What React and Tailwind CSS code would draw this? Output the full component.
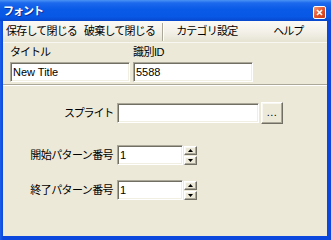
import React from 'react';

const font = { fontFamily: '"Liberation Sans", "Noto Sans CJK JP", sans-serif' };

const sunken =
  'bg-white border border-t-[#aca899] border-l-[#aca899] border-b-white border-r-white shadow-[inset_1px_1px_0_#716f64,inset_-1px_-1px_0_#f1efe2]';

const raised =
  'bg-[#ece9d8] border border-t-white border-l-white border-b-[#716f64] border-r-[#716f64] shadow-[inset_-1px_-1px_0_#aca899,inset_1px_1px_0_#f8f7f2]';

const TextBox = ({ value, className }) => (
  <div className={`${sunken} ${className} flex items-center pl-[2px] text-[11px] text-black`}>
    {value}
  </div>
);

const Spinner = () => (
  <div className="ml-px flex flex-col gap-px">
    <div className={`${raised} w-[13px] h-[9px] flex items-center justify-center`}>
      <svg width="5" height="3" viewBox="0 0 5 3"><path d="M2.5 0 L5 3 L0 3 Z" fill="#000" /></svg>
    </div>
    <div className={`${raised} w-[13px] h-[9px] flex items-center justify-center`}>
      <svg width="5" height="3" viewBox="0 0 5 3"><path d="M0 0 L5 0 L2.5 3 Z" fill="#000" /></svg>
    </div>
  </div>
);

const App = () => {
  return (
    <div
      style={font}
      className="w-[331px] h-[240px] flex flex-col bg-[#0b47dc] overflow-hidden select-none"
    >
      {/* title bar */}
      <div className="h-[21px] shrink-0 flex items-center justify-between pl-[3px] pr-[5px] bg-[linear-gradient(to_bottom,#4a93f6_0%,#1c69ec_14%,#0a5ae8_45%,#0857e5_80%,#0648cc_100%)]">
        <span className="text-white font-bold text-[11px] tracking-[-1px] mt-[1px] [text-shadow:1px_1px_0_#0a2f9c]">
          フォント
        </span>
        <div className="w-[13px] h-[13px] mt-[3px] rounded-[2px] border border-white bg-[linear-gradient(135deg,#f39a78_0%,#e2562d_50%,#c83b16_100%)] flex items-center justify-center">
          <svg width="7" height="7" viewBox="0 0 7 7">
            <path d="M1 1 L6 6 M6 1 L1 6" stroke="#fff" strokeWidth="1.6" />
          </svg>
        </div>
      </div>

      {/* frame body */}
      <div className="flex-1 flex flex-col pl-[3px] pr-[4px] pb-[4px] bg-[linear-gradient(to_right,#1a5fe8,#0b47dc_3px,#0b47dc)]">
        {/* menu bar */}
        <div className="h-[21px] shrink-0 flex items-center text-[11px] text-black bg-[linear-gradient(to_bottom,#fbfaf6,#f1efe5_60%,#e6e3d2)]">
          <span className="ml-[3px] tracking-[-0.8px] whitespace-nowrap">保存して閉じる</span>
          <span className="ml-[7px] tracking-[-0.8px] whitespace-nowrap">破棄して閉じる</span>
          <div className="ml-[7px] w-[2px] h-[18px] border-l border-l-[#aca899] border-r border-r-white" />
          <span className="ml-[12px] tracking-[-0.8px] whitespace-nowrap">カテゴリ設定</span>
          <span className="ml-[36px] tracking-[-1px] whitespace-nowrap">ヘルプ</span>
        </div>

        <div className="flex-1 flex flex-col bg-[#ece9d8] text-[11px] text-black">
          {/* title / id */}
          <div className="flex gap-[3px] pl-[7px] pt-[2px] border-t border-t-[#f8f7f2]">
            <div className="flex flex-col w-[120px]">
              <span className="h-[15px] leading-[15px] tracking-[-1px]">タイトル</span>
              <TextBox value="New Title" className="mt-[2px] w-[120px] h-[20px]" />
            </div>
            <div className="flex flex-col w-[120px]">
              <span className="h-[15px] leading-[15px] tracking-[-0.5px]">識別ID</span>
              <TextBox value="5588" className="mt-[2px] w-[120px] h-[20px]" />
            </div>
          </div>
          <div className="mt-[2px] h-[2px] border-t border-t-[#aca899] border-b border-b-white" />

          {/* sprite */}
          <div className="mt-[16px] flex items-center">
            <span className="w-[110px] text-right tracking-[-1.2px] whitespace-nowrap">スプライト</span>
            <TextBox value="" className="ml-[4px] w-[142px] h-[20px]" />
            <div className={`${raised} ml-[2px] w-[22px] h-[22px] flex items-center justify-center text-[11px]`}>
              <span className="mt-[-2px] tracking-[0.5px]">...</span>
            </div>
          </div>

          {/* start pattern */}
          <div className="mt-[21px] flex items-center">
            <span className="w-[110px] text-right tracking-[-0.6px] whitespace-nowrap">開始パターン番号</span>
            <TextBox value="1" className="ml-[4px] w-[66px] h-[20px]" />
            <Spinner />
          </div>

          {/* end pattern */}
          <div className="mt-[15px] flex items-center">
            <span className="w-[110px] text-right tracking-[-0.6px] whitespace-nowrap">終了パターン番号</span>
            <TextBox value="1" className="ml-[4px] w-[66px] h-[20px]" />
            <Spinner />
          </div>
        </div>
      </div>
    </div>
  );
};

export default App;
